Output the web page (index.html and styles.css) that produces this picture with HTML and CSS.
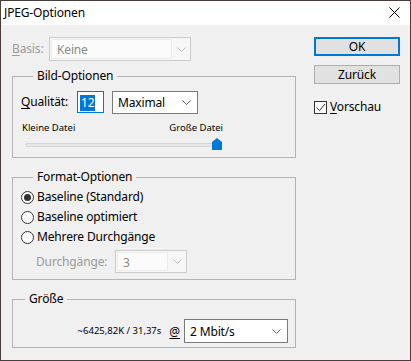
FILE: index.html
```html
<!DOCTYPE html>
<html lang="de">
<head>
    <meta charset="UTF-8">
    <title>JPEG-Optionen</title>
    <link rel="stylesheet" href="styles.css">
</head>
<body>
<div class="window">
    <!-- Titelleiste -->
    <div class="titlebar">
        <span class="title">JPEG-Optionen</span>
        <svg class="close" width="11" height="11" viewBox="0 0 11 11">
            <path d="M0.5 0.5 L10.5 10.5 M10.5 0.5 L0.5 10.5" stroke="#000" stroke-width="1" fill="none"/>
        </svg>
    </div>

    <div class="content">
        <div class="main">
            <div class="basis-row">
                <span class="label disabled"><u>B</u>asis:</span>
                <div class="combo disabled basis-combo">
                    <span class="combo-text">Keine</span>
                    <span class="combo-arrow">
                        <svg width="9" height="5" viewBox="0 0 9 5"><path d="M0.5 0.5 L4.5 4.5 L8.5 0.5" stroke="#bdbdbd" fill="none"/></svg>
                    </span>
                </div>
            </div>

            <!-- Bild-Optionen -->
            <div class="group group-bild">
                <div class="legend">Bild-Optionen</div>
                <div class="quality-row">
                    <span class="label"><u>Q</u>ualität:</span>
                    <div class="num-input"><span class="selected">12</span></div>
                    <div class="select quality-select">
                        <span>Maximal</span>
                        <svg width="9" height="5" viewBox="0 0 9 5"><path d="M0.5 0.5 L4.5 4.5 L8.5 0.5" stroke="#606060" fill="none"/></svg>
                    </div>
                </div>
                <div class="size-labels">
                    <span>Kleine Datei</span>
                    <span>Große Datei</span>
                </div>
                <div class="slider">
                    <div class="track"></div>
                    <svg class="thumb" width="10" height="12" viewBox="0 0 10 12">
                        <path d="M0 4 L5 0 L10 4 L10 12 L0 12 Z" fill="#0078d7"/>
                    </svg>
                </div>
            </div>

            <!-- Format-Optionen -->
            <div class="group group-format">
                <div class="legend">Format-Optionen</div>
                <div class="radio-row"><span class="radio checked"></span>Baseline (Standard)</div>
                <div class="radio-row"><span class="radio"></span>Baseline optimiert</div>
                <div class="radio-row"><span class="radio"></span>Mehrere Durchgänge</div>
                <div class="scans-row">
                    <span class="label disabled">Durchgänge:</span>
                    <div class="combo disabled scans-combo">
                        <span class="combo-text">3</span>
                        <span class="combo-arrow">
                            <svg width="9" height="5" viewBox="0 0 9 5"><path d="M0.5 0.5 L4.5 4.5 L8.5 0.5" stroke="#bdbdbd" fill="none"/></svg>
                        </span>
                    </div>
                </div>
            </div>

            <!-- Größe -->
            <div class="group group-size">
                <div class="legend">Größe</div>
                <div class="size-row">
                    <span class="small">~6425,82K / 31,37s</span>
                    <span class="at"><u>@</u></span>
                    <div class="select speed-select">
                        <span>2 Mbit/s</span>
                        <svg width="9" height="5" viewBox="0 0 9 5"><path d="M0.5 0.5 L4.5 4.5 L8.5 0.5" stroke="#606060" fill="none"/></svg>
                    </div>
                </div>
            </div>
        </div>

        <div class="side">
            <div class="button default">OK</div>
            <div class="button">Zurück</div>
            <div class="check-row">
                <span class="checkbox">
                    <svg width="11" height="11" viewBox="0 0 11 11"><path d="M1.5 5.5 L4.5 8.5 L10 2" stroke="#333" stroke-width="1" fill="none"/></svg>
                </span>
                <span><u>V</u>orschau</span>
            </div>
        </div>
    </div>
</div>
</body>
</html>
```

FILE: styles.css
```css
* {
    box-sizing: border-box;
}

body {
    margin: 0;
    font-family: "Noto Sans", "Open Sans", sans-serif;
    font-size: 12px;
    letter-spacing: -0.15px;
    color: #000;
    background: #f0f0f0;
}

.window {
    width: 411px;
    height: 361px;
    border: 1px solid #4a3d3b;
    background: #f0f0f0;
    display: flex;
    flex-direction: column;
}

.titlebar {
    height: 24px;
    background: #fff;
    display: flex;
    align-items: center;
    justify-content: space-between;
    padding: 0 10px 0 3px;
}

.title {
    font-size: 12px;
    line-height: 16px;
}

.close {
    margin-top: -1px;
}

.content {
    display: flex;
    padding: 12px 0 0 11px;
    gap: 18px;
}

.main {
    width: 284px;
}

.label {
    line-height: 16px;
}

.disabled {
    color: #9a9a9a;
}

u {
    text-decoration: underline;
    text-underline-offset: 2px;
}

/* Basis */
.basis-row {
    display: flex;
    align-items: center;
    height: 24px;
}

.basis-row .label {
    width: 37px;
}

.combo {
    display: flex;
    border: 1px solid #cccccc;
    background: #f7f7f7;
    height: 24px;
}

.combo-text {
    flex: 1;
    border: 1px solid #ececec;
    background: #fbfbfb;
    padding-left: 5px;
    line-height: 20px;
    color: #8a8a8a;
    margin: 1px 0 1px 1px;
}

.combo-arrow {
    width: 18px;
    display: flex;
    align-items: center;
    justify-content: center;
}

.basis-combo {
    width: 142px;
}

/* Gruppen */
.group {
    border: 1px solid #b4b4b4;
    margin-top: 15px;
}

.legend {
    width: fit-content;
    margin: -9px 0 0 12px;
    padding: 0 4px;
    background: #f0f0f0;
    line-height: 16px;
}

.group-bild {
    height: 82px;
    padding-left: 8px;
}

.quality-row {
    display: flex;
    align-items: flex-start;
    margin-top: 7px;
}

.quality-row .label {
    width: 56px;
    margin-top: 3px;
}

.num-input {
    width: 27px;
    height: 22px;
    border: 1px solid #0078d7;
    background: #fff;
    padding: 2px 0 0 2px;
}

.selected {
    display: inline-block;
    background: #0078d7;
    color: #fff;
    line-height: 16px;
    padding: 0 1px;
}

.select {
    display: flex;
    align-items: center;
    justify-content: space-between;
    border: 1px solid #7a7a7a;
    background: #fff;
    padding: 0 6px 0 5px;
}

.quality-select {
    width: 86px;
    height: 23px;
    margin-left: 8px;
}

.size-labels {
    display: flex;
    justify-content: space-between;
    width: 201px;
    margin: 8px 0 0 1px;
    font-size: 9.5px;
    letter-spacing: 0;
    line-height: 12px;
}

.slider {
    position: relative;
    width: 200px;
    height: 14px;
    margin: 3px 0 0 5px;
}

.track {
    position: absolute;
    left: 0;
    right: 8px;
    top: 6px;
    height: 4px;
    background: #e7e7e7;
    border: 1px solid #d6d6d6;
}

.thumb {
    position: absolute;
    left: 186px;
    top: 1px;
}

/* Format-Optionen */
.group-format {
    height: 103px;
    margin-top: 19px;
    padding-left: 8px;
}

.radio-row {
    display: flex;
    align-items: center;
    height: 20px;
    line-height: 16px;
}

.group-format .legend + .radio-row {
    margin-top: 2px;
}

.radio {
    width: 13px;
    height: 13px;
    border: 1px solid #333;
    border-radius: 50%;
    background: #fff;
    margin-right: 3px;
    display: flex;
    align-items: center;
    justify-content: center;
}

.radio.checked::after {
    content: "";
    width: 7px;
    height: 7px;
    border-radius: 50%;
    background: #333;
}

.scans-row {
    display: flex;
    align-items: center;
    margin-top: 3px;
    padding-left: 15px;
}

.scans-row .label {
    width: 79px;
}

.scans-combo {
    width: 72px;
    height: 23px;
}

/* Größe */
.group-size {
    height: 49px;
    margin-top: 19px;
}

.size-row {
    display: flex;
    align-items: center;
    justify-content: flex-end;
    margin-top: 12px;
    padding-right: 7px;
}

.small {
    font-size: 9.5px;
    letter-spacing: 0;
    line-height: 12px;
}

.at {
    margin: 0 4px 0 8px;
}

.speed-select {
    width: 104px;
    height: 24px;
}

/* Rechte Spalte */
.side {
    width: 86px;
    display: flex;
    flex-direction: column;
}

.button {
    height: 19px;
    border: 1px solid #adadad;
    background: #e1e1e1;
    text-align: center;
    line-height: 17px;
    margin-bottom: 9px;
}

.button.default {
    border: 2px solid #0078d7;
    line-height: 15px;
}

.check-row {
    display: flex;
    align-items: center;
    margin-top: 6px;
    line-height: 16px;
}

.checkbox {
    width: 13px;
    height: 13px;
    border: 1px solid #333;
    background: #fff;
    margin-right: 3px;
    display: flex;
}
```
